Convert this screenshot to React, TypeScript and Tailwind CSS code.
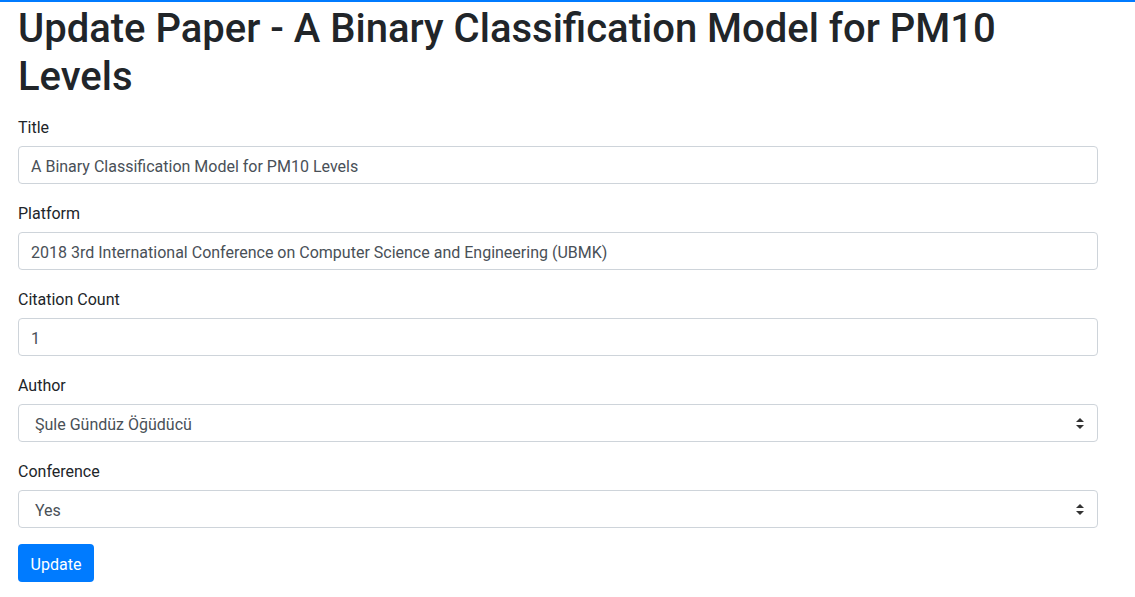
import React from "react";

const font = { fontFamily: "Roboto, 'Liberation Sans', sans-serif" };

function Label({ children }: { children: React.ReactNode }) {
  return <div className="mb-2 h-6 pt-[2px] text-[16px] leading-6 text-[#212529]">{children}</div>;
}

function Field({ label, value }: { label: string; value: string }) {
  return (
    <div className="mb-4">
      <Label>{label}</Label>
      <div className="h-[38px] w-[1080px] rounded border border-[#ced4da] bg-white px-3 pt-[8px] pb-[4px] text-[16px] leading-6 text-[#495057]">
        {value}
      </div>
    </div>
  );
}

function SelectField({ label, value }: { label: string; value: string }) {
  return (
    <div className="mb-4">
      <Label>{label}</Label>
      <div className="flex h-[38px] w-[1080px] items-center justify-between rounded border border-[#ced4da] bg-white pl-4 pr-[13px] pt-[3px] text-[16px] leading-6 text-[#495057]">
        <span>{value}</span>
        <svg width="8" height="11" viewBox="0 0 8 11" className="-mt-[3px]">
          <path d="M4 0 L8 4 L0 4 Z" fill="#333" />
          <path d="M0 7 L8 7 L4 11 Z" fill="#333" />
        </svg>
      </div>
    </div>
  );
}

export default function App() {
  return (
    <div className="min-h-[597px] w-full border-t-2 border-[#007bff] bg-white" style={font}>
      <div className="px-[18px]">
        <h1 className="mt-[3px] mb-[13px] w-[1080px] text-[40px] font-medium leading-[48px] text-[#212529]">
          Update Paper - A Binary Classification Model for PM10 Levels
        </h1>
        <Field label="Title" value="A Binary Classification Model for PM10 Levels" />
        <Field
          label="Platform"
          value="2018 3rd International Conference on Computer Science and Engineering (UBMK)"
        />
        <Field label="Citation Count" value="1" />
        <SelectField label="Author" value="Şule Gündüz Öğüdücü" />
        <SelectField label="Conference" value="Yes" />
        <button className="h-[38px] w-[76px] rounded bg-[#007bff] pt-[3px] text-[16px] leading-6 text-white">
          Update
        </button>
      </div>
    </div>
  );
}
